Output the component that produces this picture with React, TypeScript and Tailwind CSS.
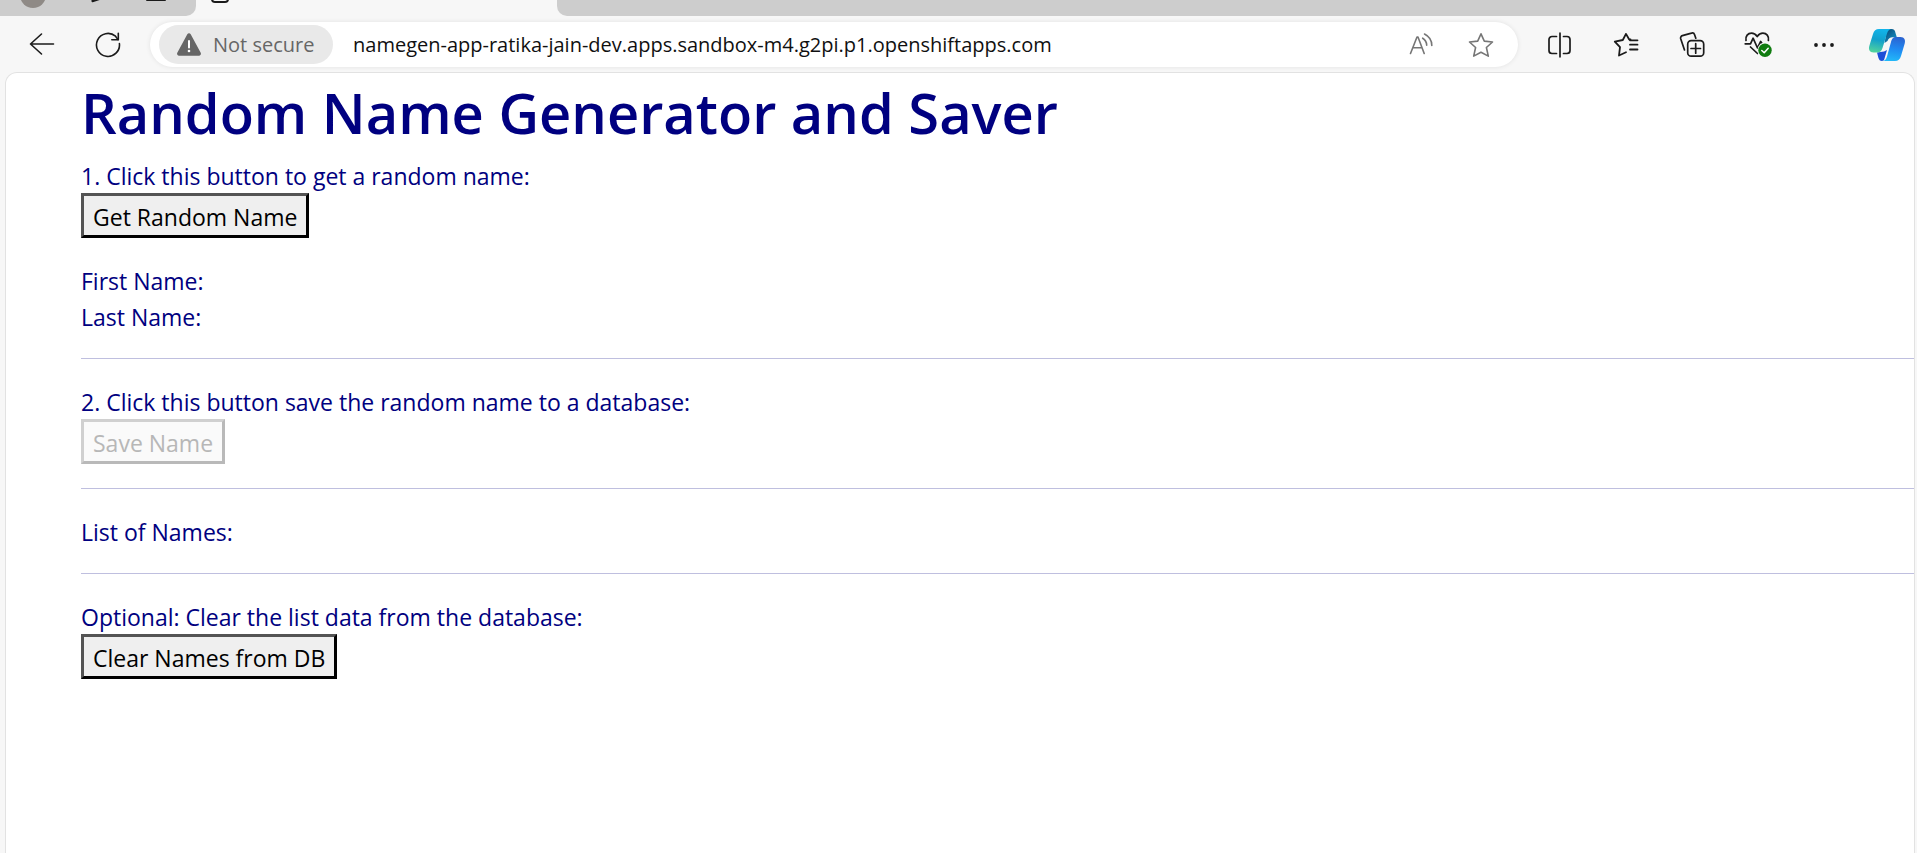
import type { ReactNode } from "react";

function ToolButton({ label, children }: { label: string; children: ReactNode }) {
  return (
    <button type="button" aria-label={label} className="flex h-10 w-[66px] shrink-0 items-center justify-center">
      {children}
    </button>
  );
}

function TabStrip() {
  return (
    <div className="flex h-4 overflow-hidden bg-[#f7f7f7]">
      <div className="w-[196px] shrink-0 overflow-hidden rounded-br-[10px] bg-[#cdcdcd]">
        <svg width="196" height="16" viewBox="0 0 196 16" fill="none" aria-hidden="true">
          <circle cx="33" cy="-5" r="13" fill="#8f8a86" />
          <path d="M92.500 -1v2.300l7 -2.300" stroke="#1b1b1b" strokeWidth="2" strokeLinejoin="round" />
          <path d="M147 0h18" stroke="#1b1b1b" strokeWidth="2" strokeLinecap="round" />
        </svg>
      </div>
      <div className="w-[361px] shrink-0 pl-[15px]">
        <svg width="20" height="16" viewBox="0 0 20 16" fill="none" aria-hidden="true">
          <path d="M1 -6v5a3 3 0 0 0 3 3h10a3 3 0 0 0 3 -3v-5" stroke="#1b1b1b" strokeWidth="2" />
        </svg>
      </div>
      <div className="flex-1 rounded-bl-[10px] bg-[#cdcdcd]" />
    </div>
  );
}

function BackIcon() {
  return (
    <svg width="26" height="26" viewBox="0 0 26 26" fill="none" stroke="#1b1b1b" strokeWidth="1.600" strokeLinecap="round" strokeLinejoin="round">
      <path d="M24.500 12H1.500M12.500 2L1.500 12l11 10" />
    </svg>
  );
}

function ReloadIcon() {
  return (
    <svg width="26" height="26" viewBox="0 0 26 26" fill="none" stroke="#1b1b1b" strokeWidth="1.600" strokeLinecap="round" strokeLinejoin="round">
      <path d="M24.400 11.500A11.500 11.500 0 1 1 20.500 4.200L23 7.600" />
      <path d="M23.300 1.300v6.500h-6.500" />
    </svg>
  );
}

function WarningIcon() {
  return (
    <svg width="24" height="24" viewBox="0 0 24 24" aria-hidden="true">
      <path d="M10.300 1.200a2 2 0 0 1 3.400 0l10 18.600a2 2 0 0 1 -1.800 2.900H2.100a2 2 0 0 1 -1.800 -2.900z" fill="#666666" />
      <path d="M12 8v6.500" stroke="#fff" strokeWidth="2" strokeLinecap="round" />
      <circle cx="12" cy="18" r="1.300" fill="#fff" />
    </svg>
  );
}

function ReadAloudIcon() {
  return (
    <svg width="24" height="24" viewBox="0 0 24 24" fill="none" stroke="#767676" strokeWidth="1.600" strokeLinecap="round" strokeLinejoin="round">
      <path d="M1.500 20.500L8 4h1l6.200 16.500M4 14.800h9" />
      <path d="M13.700 5.200a8.500 8.500 0 0 1 4 7M15.500 1a13 13 0 0 1 7.300 11.500" />
    </svg>
  );
}

function StarIcon() {
  return (
    <svg width="26" height="26" viewBox="0 0 26 26" fill="none" stroke="#767676" strokeWidth="1.600" strokeLinejoin="round">
      <path d="M13 1.800l3.300 7.300 8.200.9-6.100 5.500 1.900 8.600L13 20.200l-7.300 3.900 1.900-8.600L1.500 10l8.200-.9z" />
    </svg>
  );
}

function SplitIcon() {
  return (
    <svg width="26" height="26" viewBox="0 0 26 26" fill="none" stroke="#1b1b1b" strokeWidth="1.700" strokeLinecap="round">
      <path d="M9.500 4.500H5a3 3 0 0 0 -3 3v11a3 3 0 0 0 3 3h4.500M16.500 4.500H20a3 3 0 0 1 3 3v11a3 3 0 0 1 -3 3h-3.500M13 1.200v23.600" />
    </svg>
  );
}

function FavoritesIcon() {
  return (
    <svg width="26" height="26" viewBox="0 0 26 26" fill="none" stroke="#1b1b1b" strokeWidth="1.800" strokeLinecap="round" strokeLinejoin="round">
      <path d="M17.500 7.500h-1.300L13 1.900 9.800 8 1.800 9.700l5.200 5.500-1 8.300 7-3.200" />
      <path d="M17 12.700h7.500M17 8.300h7.500M17 17.500h7.500" />
    </svg>
  );
}

function CollectionsIcon() {
  return (
    <svg width="26" height="26" viewBox="0 0 26 26" fill="none" stroke="#1b1b1b" strokeWidth="1.700" strokeLinecap="round" strokeLinejoin="round">
      <path d="M5.500 18L1.700 6.700a2.500 2.500 0 0 1 1.700-3.100L12.500 1.100a2.500 2.500 0 0 1 3.100 1.600l1.200 3.500" />
      <rect x="8.700" y="8.700" width="16" height="15.500" rx="3.500" />
      <path d="M16.700 11.700v9.500M12 16.500h9.500" />
    </svg>
  );
}

function EssentialsIcon() {
  return (
    <svg width="28" height="28" viewBox="0 0 28 28" fill="none" stroke="#1b1b1b" strokeWidth="1.700" strokeLinecap="round" strokeLinejoin="round">
      <path d="M2 9.500C1.200 5 4 2.200 7.500 2.200c2.600 0 4.300 1.300 5.700 3.400 1.400-2.100 3.100-3.400 5.700-3.400 3.500 0 6.300 2.800 5.500 7.300" />
      <path d="M1.200 12.800h5.300l2.600-5.600 4.400 9.800 3.200-6.500 1.500 2.300" />
      <path d="M6.500 16l7 6.500" />
      <circle cx="21" cy="19.200" r="7.600" fill="#f7f7f7" stroke="none" />
      <circle cx="21" cy="19.200" r="6.700" fill="#107c10" stroke="none" />
      <path d="M17.800 19.500l2.400 2.200 4-4.500" stroke="#fff" strokeWidth="1.500" />
    </svg>
  );
}

function MoreIcon() {
  return (
    <svg width="22" height="6" viewBox="0 0 22 6" fill="#1b1b1b">
      <circle cx="3" cy="3" r="1.900" />
      <circle cx="11" cy="3" r="1.900" />
      <circle cx="19" cy="3" r="1.900" />
    </svg>
  );
}

function CopilotIcon() {
  return (
    <svg width="38" height="34" viewBox="0 0 38 34" fill="none">
      <defs>
        <linearGradient id="copilot-left" x1="12" y1="1" x2="7" y2="25" gradientUnits="userSpaceOnUse">
          <stop offset="0" stopColor="#12b4ea" />
          <stop offset="0.450" stopColor="#12a0cc" />
          <stop offset="1" stopColor="#55d69a" />
        </linearGradient>
        <linearGradient id="copilot-right" x1="29" y1="9" x2="25" y2="33" gradientUnits="userSpaceOnUse">
          <stop offset="0" stopColor="#2b63d0" />
          <stop offset="0.500" stopColor="#1f8af2" />
          <stop offset="1" stopColor="#22b8f8" />
        </linearGradient>
        <linearGradient id="copilot-top" x1="19" y1="2" x2="27" y2="10" gradientUnits="userSpaceOnUse">
          <stop offset="0" stopColor="#0b4f7c" />
          <stop offset="1" stopColor="#1487bb" />
        </linearGradient>
      </defs>
      <path d="M19 1h4.500c2.500 0 3.500 1.500 4 4l1.300 4.200H24.500c-2.500 0-4 1.200-5 3.800l-3 2z" fill="url(#copilot-top)" />
      <path d="M9 24.500l7-1 3-1.500-2.500 8.500c-.6 1.800-1 2.500-2.500 2.500-2 0-3-1-3.700-3.500z" fill="#1c4fd8" />
      <path d="M11 1H24c-2.800 0-4 1.500-5 4.500L14.500 20c-1 3-2.500 4.500-5.500 4.500H5.500C1.500 24.500.300 21.500 1.300 18L5 6C6 2.500 7.800 1 11 1z" fill="url(#copilot-left)" />
      <path d="M28 9h4.500c4 0 5.200 3 4.200 6.500L33 28c-1 3.500-2.800 5-6 5H14c2.800 0 4-1.500 5-4.500L23 14c1-3.500 2-5 5-5z" fill="url(#copilot-right)" />
    </svg>
  );
}

function Toolbar() {
  return (
    <div className="flex h-14 items-center bg-[#f7f7f7] pt-px pl-[9px]">
      <ToolButton label="Back"><BackIcon /></ToolButton>
      <ToolButton label="Refresh"><ReloadIcon /></ToolButton>
      <div className="mx-[9px] flex h-[45px] min-w-0 flex-1 items-center rounded-full bg-white pr-[7px] pl-[9px] shadow-[0_0_5px_rgba(0,0,0,0.09)]">
        <button type="button" className="flex h-[39px] w-[174px] shrink-0 items-center gap-3 rounded-full bg-[#e9e9e9] pl-[18px] text-xl whitespace-nowrap text-[#666666]">
          <WarningIcon />
          Not secure
        </button>
        <input
          type="text"
          aria-label="Address"
          defaultValue="namegen-app-ratika-jain-dev.apps.sandbox-m4.g2pi.p1.openshiftapps.com"
          className="ml-5 min-w-0 flex-1 bg-transparent text-xl text-[#101010] outline-none"
        />
        <button type="button" aria-label="Read aloud" className="flex h-9 w-[60px] items-center justify-center"><ReadAloudIcon /></button>
        <button type="button" aria-label="Add to favorites" className="flex h-9 w-[60px] items-center justify-center"><StarIcon /></button>
      </div>
      <ToolButton label="Split screen"><SplitIcon /></ToolButton>
      <ToolButton label="Favorites"><FavoritesIcon /></ToolButton>
      <ToolButton label="Collections"><CollectionsIcon /></ToolButton>
      <ToolButton label="Browser essentials"><EssentialsIcon /></ToolButton>
      <ToolButton label="Settings and more"><MoreIcon /></ToolButton>
      <button type="button" aria-label="Copilot" className="flex h-10 w-[60px] shrink-0 items-center justify-center"><CopilotIcon /></button>
    </div>
  );
}

function PageButton({ disabled = false, children }: { disabled?: boolean; children: ReactNode }) {
  return (
    <button
      type="button"
      disabled={disabled}
      className="block h-[45px] border-[3px] border-t-[#545454] border-r-black border-b-black border-l-[#545454] bg-[#efefef] px-[9px] pt-[3px] leading-9 text-black disabled:border-t-[#d0d0d0] disabled:border-r-[#b9b9b9] disabled:border-b-[#b9b9b9] disabled:border-l-[#d0d0d0] disabled:bg-[#fafafa] disabled:text-[#b7b7b7]"
    >
      {children}
    </button>
  );
}

function Line({ children }: { children: ReactNode }) {
  return <p className="pt-[2px] leading-[34px]">{children}</p>;
}

function Divider() {
  return <hr className="my-6 border-t border-[#bfbfdf]" />;
}

export default function App() {
  return (
    <div className="flex min-h-screen flex-col bg-[#f7f7f7] font-['Open_Sans','Noto_Sans',sans-serif]">
      <TabStrip />
      <Toolbar />
      <main className="mr-[2px] ml-[5px] flex-1 rounded-t-xl border border-b-0 border-[#e2e2e2] bg-white pl-[75px] text-[23px] leading-9 text-[#000080]">
        <h1 className="mb-3 pt-1.5 text-[56px] leading-[66px] font-semibold">Random Name Generator and Saver</h1>
        <Line>1. Click this button to get a random name:</Line>
        <PageButton>Get Random Name</PageButton>
        <div className="mt-6">
          <Line>First Name:</Line>
          <Line>Last Name:</Line>
        </div>
        <Divider />
        <Line>2. Click this button save the random name to a database:</Line>
        <PageButton disabled>Save Name</PageButton>
        <Divider />
        <Line>List of Names:</Line>
        <Divider />
        <Line>Optional: Clear the list data from the database:</Line>
        <PageButton>Clear Names from DB</PageButton>
      </main>
    </div>
  );
}
